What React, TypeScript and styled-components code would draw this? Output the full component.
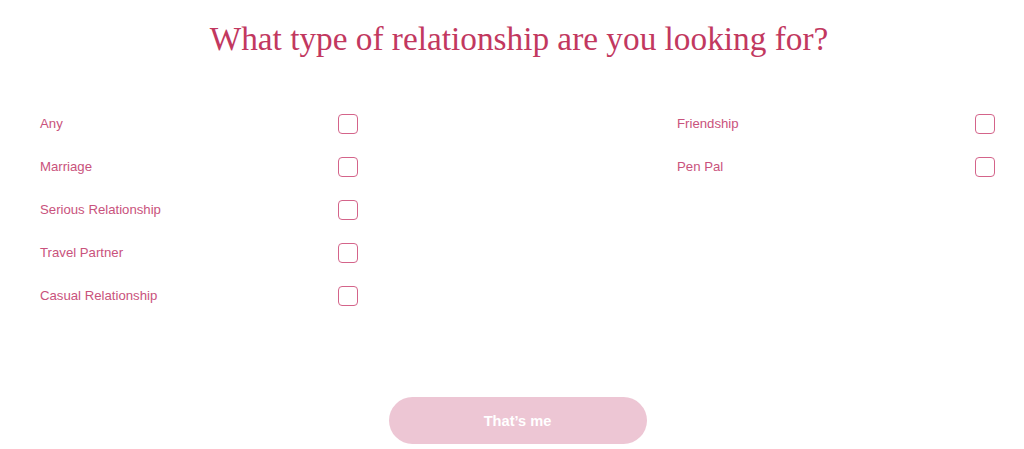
import React from "react";
import styled, { createGlobalStyle } from "styled-components";

const Global = createGlobalStyle`
  html, body { margin: 0; padding: 0; background: #ffffff; }
  * { box-sizing: border-box; }
`;

const Page = styled.div`
  width: 1024px;
  height: 449px;
  display: flex;
  flex-direction: column;
  align-items: stretch;
  padding: 19px 29px 0 40px;
`;

const Title = styled.h1`
  margin: 0;
  text-align: center;
  font-family: "Liberation Serif", "Times New Roman", serif;
  font-weight: 400;
  font-size: 33.3px;
  line-height: 40px;
  color: #c2385f;
  padding-left: 3px;
`;

const Grid = styled.div`
  margin-top: 54px;
  display: grid;
  grid-template-columns: 318px 319px 318px;
  height: 244px;
`;

const Column = styled.div<{ $col: number }>`
  grid-column: ${(p) => p.$col};
  display: flex;
  flex-direction: column;
  gap: 23px;
`;

const Row = styled.label`
  display: flex;
  align-items: center;
  justify-content: space-between;
  height: 20px;
`;

const Label = styled.span`
  font-family: "Liberation Sans", Arial, sans-serif;
  font-size: 13.2px;
  color: #c9527c;
`;

const Box = styled.span`
  width: 20px;
  height: 20px;
  margin-top: 1px;
  border: 1.5px solid #d4648a;
  border-radius: 4px;
  background: #fff;
`;

const Footer = styled.div`
  display: flex;
  justify-content: center;
  margin-top: 40px;
`;

const Button = styled.button`
  width: 258px;
  height: 47px;
  border: none;
  border-radius: 24px;
  background: #edc6d4;
  color: #ffffff;
  font-family: "Liberation Sans", Arial, sans-serif;
  font-weight: 700;
  font-size: 14.6px;
`;

const left = ["Any", "Marriage", "Serious Relationship", "Travel Partner", "Casual Relationship"];
const right = ["Friendship", "Pen Pal"];

export default function App() {
  return (
    <>
      <Global />
      <Page>
        <Title>What type of relationship are you looking for?</Title>
        <Grid>
          <Column $col={1}>
            {left.map((t) => (
              <Row key={t}>
                <Label>{t}</Label>
                <Box />
              </Row>
            ))}
          </Column>
          <Column $col={3}>
            {right.map((t) => (
              <Row key={t}>
                <Label>{t}</Label>
                <Box />
              </Row>
            ))}
          </Column>
        </Grid>
        <Footer>
          <Button>That’s me</Button>
        </Footer>
      </Page>
    </>
  );
}
